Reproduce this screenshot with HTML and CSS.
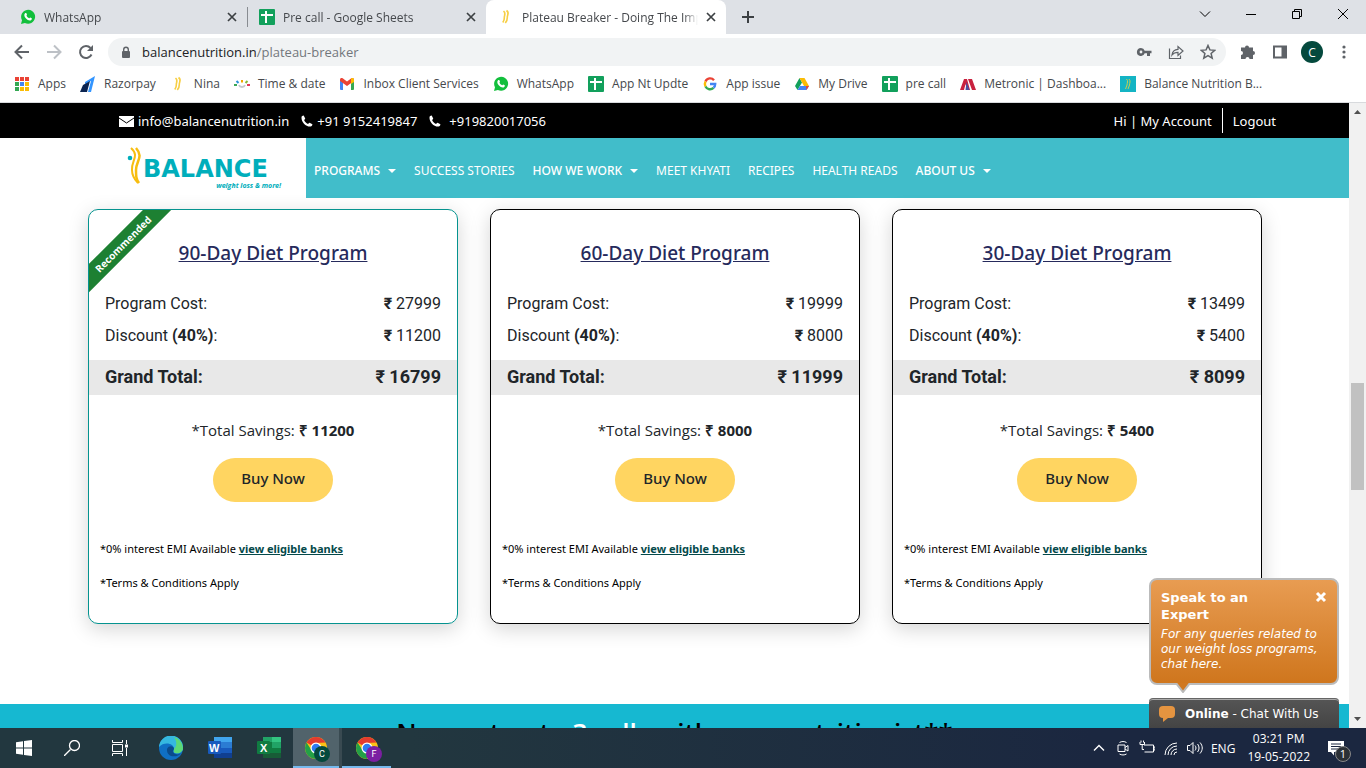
FILE: index.html
```html
<!DOCTYPE html>
<html lang="en">
<head>
  <meta charset="UTF-8" />
  <meta name="viewport" content="width=device-width, initial-scale=1.0"/>
  <title>Plateau Breaker</title>
  <link rel="stylesheet" href="styles.css">
</head>
<body>

  <!-- shared icons -->
  <svg class="sprite" aria-hidden="true">
    <symbol id="i-whatsapp" viewBox="0 0 16 16">
      <path d="M1 15l1-3.800A7 7 0 1 1 4.900 14z" fill="#12bf3c"/>
      <path d="M5 4.300c.5-.6 1.200-.5 1.400 0l.6 1.400c0 .5-.7.8-.6 1.100.6 1.200 1.500 2 2.700 2.500.4 0 .7-.9 1.100-.8l1.500.8c.4.4 0 1.500-.7 1.900-1.500.8-3.700-.3-5-1.700C4.500 8.100 3.600 5.900 5 4.300z" fill="#fff"/>
    </symbol>
    <symbol id="i-sheet" viewBox="0 0 16 16">
      <rect width="16" height="16" rx="1" fill="#12a05c"/>
      <path d="M2 5h12v2H8v7H6V7H2zM6 2h2v3H6z" fill="#fff"/>
    </symbol>
    <symbol id="i-wave" viewBox="0 0 16 16">
      <path d="M5.500 2c3 2.500.5 4.500.8 7 .1 2-.5 3-1.500 4.500M8.500 1.500c3.500 2.500.5 4.500.8 7 .1 2-.8 4-2 5.500" fill="none" stroke="#f7cf45" stroke-width="1.600"/>
    </symbol>
    <symbol id="i-close" viewBox="0 0 10 10">
      <path d="M1 1l8 8M9 1L1 9" stroke="#3c4043" stroke-width="1.700"/>
    </symbol>
    <symbol id="i-phone" viewBox="0 0 12 12">
      <path d="M.5 2.200C.6 1.300 1.700.5 2.700.6l1.500 2.800c.1.700-1.100 1.100-1.100 1.600.6 1.800 2 3.200 3.900 3.900.5 0 1-1.200 1.600-1.100l2.800 1.500c.1 1.100-.8 2.200-1.800 2.300C5 12 .2 7 .5 2.200z" fill="#fff"/>
    </symbol>
    <symbol id="i-chrome" viewBox="0 0 24 24">
      <circle cx="12" cy="12" r="11" fill="#fbc116"/>
      <path d="M12 12L2.500 6.500A11 11 0 0 1 21.500 6.500L12 7z" fill="#e33b2e"/>
      <path d="M12 23A11 11 0 0 1 2.500 6.500l5.200 8 6 2z" fill="#23a047"/>
      <circle cx="12" cy="12" r="5.500" fill="#fff"/>
      <circle cx="12" cy="12" r="4.300" fill="#2e7cf0"/>
    </symbol>
  </svg>

  <header class="tabs">
    <div class="tab">
      <svg class="icon"><use href="#i-whatsapp"/></svg>
      <span class="tab-title">WhatsApp</span>
      <button class="tab-close" aria-label="Close tab"><svg><use href="#i-close"/></svg></button>
    </div>
    <div class="tab divided">
      <svg class="icon"><use href="#i-sheet"/></svg>
      <span class="tab-title">Pre call - Google Sheets</span>
      <button class="tab-close" aria-label="Close tab"><svg><use href="#i-close"/></svg></button>
    </div>
    <div class="tab active">
      <svg class="icon"><use href="#i-wave"/></svg>
      <span class="tab-title">Plateau Breaker - Doing The Impossible</span>
      <button class="tab-close" aria-label="Close tab"><svg><use href="#i-close"/></svg></button>
    </div>
    <button class="new-tab" aria-label="New tab">
      <svg viewBox="0 0 12 12"><path d="M6 0v12M0 6h12" stroke="#3c4043" stroke-width="2"/></svg>
    </button>
    <div class="window-buttons">
      <button aria-label="Search tabs"><svg viewBox="0 0 12 12"><path d="M1 3.500l5 5 5-5"/></svg></button>
      <button aria-label="Minimize"><svg viewBox="0 0 12 12"><path d="M1 6.500h10"/></svg></button>
      <button aria-label="Restore"><svg viewBox="0 0 12 12"><path d="M1.500 3.500h7v7h-7zM3.500 3.500v-2h7v7h-2"/></svg></button>
      <button aria-label="Close"><svg viewBox="0 0 12 12"><path d="M1 1l10 10M11 1L1 11"/></svg></button>
    </div>
  </header>

  <div class="toolbar">
    <button aria-label="Back"><svg viewBox="0 0 16 16"><path d="M15 8H2M8 1.500L1.500 8 8 14.500" fill="none" stroke="#5f6368" stroke-width="2"/></svg></button>
    <button aria-label="Forward"><svg viewBox="0 0 16 16"><path d="M1 8h13M8 1.500L14.500 8 8 14.500" fill="none" stroke="#bdc1c6" stroke-width="2"/></svg></button>
    <button aria-label="Reload"><svg viewBox="0 0 16 16"><path d="M13.500 10.500A6 6 0 1 1 12.500 4" fill="none" stroke="#5f6368" stroke-width="2"/><path d="M15 1v6H9z" fill="#5f6368"/></svg></button>
    <div class="omnibox">
      <svg class="lock" viewBox="0 0 10 13"><rect x="1" y="5" width="8" height="7" rx="1" fill="#5f6368"/><path d="M2.700 5V3.500a2.300 2.300 0 0 1 4.600 0V5" fill="none" stroke="#5f6368" stroke-width="1.400"/></svg>
      <a class="url" href="#">balancenutrition.in<span>/plateau-breaker</span></a>
      <button aria-label="Passwords"><svg viewBox="0 0 16 16"><path d="M5 4a4 4 0 1 0 3.700 5.300H11V12h3V9.300h1.500V6.700H8.700A4 4 0 0 0 5 4zm0 2.600a1.400 1.400 0 1 1 0 2.800 1.400 1.400 0 0 1 0-2.800z" fill="#5f6368" fill-rule="evenodd"/></svg></button>
      <button aria-label="Share"><svg viewBox="0 0 16 16"><path d="M1.500 4.500v10h11v-3M4 11c.5-4 3-5.500 6-5.600V2.500l5 4.500-5 4.500V8.300C7.500 8.300 5.500 9 4 11z" fill="none" stroke="#5f6368" stroke-width="1.200"/></svg></button>
      <button aria-label="Bookmark"><svg viewBox="0 0 16 16"><path d="M8 1.500l1.900 4.400 4.800.4-3.600 3.200 1.100 4.700L8 11.700l-4.200 2.500 1.100-4.700L1.300 6.300l4.800-.4z" fill="none" stroke="#5f6368" stroke-width="1.500"/></svg></button>
    </div>
    <button aria-label="Extensions"><svg viewBox="0 0 16 16"><path d="M5 3.500a2 2 0 0 1 4 0h4v3.500a2 2 0 0 1 0 4v4H9.500a2 2 0 0 0-4 0H1v-4a2 2 0 0 0 0-4V3.500z" fill="#5f6368"/></svg></button>
    <button aria-label="Side panel"><svg viewBox="0 0 16 16"><path d="M2 2.500h12v11H2z" fill="none" stroke="#5f6368" stroke-width="2"/><path d="M9.500 2h4v12h-4z" fill="#5f6368"/></svg></button>
    <button class="avatar">C</button>
    <button aria-label="Menu"><svg viewBox="0 0 16 16" fill="#5f6368"><circle cx="8" cy="3" r="1.600"/><circle cx="8" cy="8" r="1.600"/><circle cx="8" cy="13" r="1.600"/></svg></button>
  </div>

  <nav class="bookmarks">
    <a href="#"><svg class="icon" viewBox="0 0 16 16"><path d="M1 1h4v4H1z" fill="#ea4335"/><path d="M6 1h4v4H6z" fill="#ea4335"/><path d="M11 1h4v4h-4z" fill="#ea4335"/><path d="M1 6h4v4H1z" fill="#34a853"/><path d="M6 6h4v4H6z" fill="#4285f4"/><path d="M11 6h4v4h-4z" fill="#fbbc04"/><path d="M1 11h4v4H1z" fill="#34a853"/><path d="M6 11h4v4H6z" fill="#fbbc04"/><path d="M11 11h4v4h-4z" fill="#fbbc04"/><path d="M5 0h1v16H5zM10 0h1v16h-1zM0 5h16v1H0zM0 10h16v1H0z" fill="#fff"/></svg>Apps</a>
    <a href="#"><svg class="icon" viewBox="0 0 16 16"><path d="M5 6l10-6-4 16H8l3-11-6 3z" fill="#3395ff"/><path d="M3 9l7-4-3 11H0z" fill="#0b2450"/></svg>Razorpay</a>
    <a href="#"><svg class="icon"><use href="#i-wave"/></svg>Nina</a>
    <a href="#"><svg class="icon" viewBox="0 0 16 16" fill="none" stroke-width="2"><path d="M0 9h3" stroke="#3aa757"/><path d="M2.500 5l2 2" stroke="#2a90d9"/><path d="M8 4v2.500" stroke="#f2a900"/><path d="M13.500 5l-2 2" stroke="#86b93c"/><path d="M13 9h3" stroke="#e0395a"/><path d="M5 9c1 2.500 5 2.500 6 0" stroke="#c5c8cc"/></svg>Time &amp; date</a>
    <a href="#"><svg class="icon" viewBox="0 0 16 16"><path d="M1 4h3v10H2a1 1 0 0 1-1-1z" fill="#4285f4"/><path d="M12 4h3v9a1 1 0 0 1-1 1h-2z" fill="#34a853"/><path d="M1 4c0-2 1.500-2.500 3-1.500l4 3 4-3C13.500 1.500 15 2 15 4v1l-7 5-7-5z" fill="#ea4335"/><path d="M12 2.500C13.500 1.500 15 2 15 4v2l-3 2z" fill="#fbbc04"/></svg>Inbox Client Services</a>
    <a href="#"><svg class="icon"><use href="#i-whatsapp"/></svg>WhatsApp</a>
    <a href="#"><svg class="icon"><use href="#i-sheet"/></svg>App Nt Updte</a>
    <a href="#"><svg class="icon" viewBox="0 0 16 16" fill="none" stroke-width="2.400"><path d="M12 4.200A5 5 0 0 0 3.500 5.500" stroke="#ea4335"/><path d="M3.500 5.500a5.200 5.200 0 0 0 0 5" stroke="#fbbc04"/><path d="M3.500 10.500a5 5 0 0 0 8 1.300" stroke="#34a853"/><path d="M8 8h5.200c0 1.800-.6 3-1.700 3.800" stroke="#4285f4"/></svg>App issue</a>
    <a href="#"><svg class="icon" viewBox="0 0 16 16"><path d="M5.500 2L8 6.500 3.500 14 1 10z" fill="#12a05c"/><path d="M5.500 2h5l4.500 8h-5z" fill="#fbbc04"/><path d="M6 10h9l-2.500 4h-9z" fill="#4285f4"/><path d="M12 10h3l-2.500 4z" fill="#ea4335"/></svg>My Drive</a>
    <a href="#"><svg class="icon"><use href="#i-sheet"/></svg>pre call</a>
    <a href="#"><svg class="icon" viewBox="0 0 16 16"><path d="M0 14L4 3h3l3 11H7L5.500 8 4 14zM8 3h4l4 11h-4z" fill="#c9223f"/><path d="M6.500 6l3 8h-4z" fill="#4b4fa0"/></svg>Metronic | Dashboa...</a>
    <a href="#"><svg class="icon" viewBox="0 0 16 16"><path d="M0 0h16v16H0z" fill="#14b4c4"/><path d="M6.500 3c2 2 .5 4 .5 6l-1.500 4M9 3c2 2 .5 4 .5 6L8 13" fill="none" stroke="#c9cf50"/></svg>Balance Nutrition B...</a>
  </nav>

  <main class="viewport">
    <div class="page">
      <div class="topbar">
        <a href="#"><svg class="mail" viewBox="0 0 15 12"><path d="M0 1h15v11H0z" fill="#fff"/><path d="M0 3l7.500 5L15 3" fill="none" stroke="#000"/></svg>info@balancenutrition.in</a>
        <a href="#"><svg class="phone"><use href="#i-phone"/></svg>+91 9152419847</a>
        <a class="spaced" href="#"><svg class="phone"><use href="#i-phone"/></svg>+919820017056</a>
        <a class="account" href="#">Hi | My Account</a>
        <a class="logout" href="#">Logout</a>
      </div>

      <div class="site-nav">
        <a class="logo" href="#">
          <svg viewBox="0 0 16 40"><path d="M4 1c9 8 0 13 1 22 0 6 2 9 6 13" fill="none" stroke="#f7bd10" stroke-width="2"/><path d="M9 1c8 9 0 13 0 22 0 6 0 9 3 13" fill="none" stroke="#f7bd10" stroke-width="2.500"/><circle cx="3" cy="11" r="2.300" fill="#00aebb"/></svg>
          <span class="logo-text">
            <span class="brand">BALANCE</span>
            <span class="tagline">weight loss &amp; more!</span>
          </span>
        </a>
        <nav class="menu">
          <a class="drop" href="#">PROGRAMS</a>
          <a href="#">SUCCESS STORIES</a>
          <a class="drop" href="#">HOW WE WORK</a>
          <a href="#">MEET KHYATI</a>
          <a href="#">RECIPES</a>
          <a href="#">HEALTH READS</a>
          <a class="drop" href="#">ABOUT US</a>
        </nav>
      </div>

      <section class="plans">
        <article class="plan recommended">
          <div class="ribbon">Recommended</div>
          <h3>90-Day Diet Program</h3>
          <table>
            <tr><th>Program Cost:</th><td><b>₹</b> 27999</td></tr>
            <tr class="discount"><th>Discount <b>(40%)</b>:</th><td><b>₹</b> 11200</td></tr>
            <tr class="total"><th>Grand Total:</th><td>₹ 16799</td></tr>
          </table>
          <p class="savings">*Total Savings: <b>₹ 11200</b></p>
          <button class="buy">Buy Now</button>
          <p class="note">*0% interest EMI Available <a href="#">view eligible banks</a></p>
          <p class="note">*Terms &amp; Conditions Apply</p>
        </article>

        <article class="plan">
          <h3>60-Day Diet Program</h3>
          <table>
            <tr><th>Program Cost:</th><td><b>₹</b> 19999</td></tr>
            <tr class="discount"><th>Discount <b>(40%)</b>:</th><td><b>₹</b> 8000</td></tr>
            <tr class="total"><th>Grand Total:</th><td>₹ 11999</td></tr>
          </table>
          <p class="savings">*Total Savings: <b>₹ 8000</b></p>
          <button class="buy">Buy Now</button>
          <p class="note">*0% interest EMI Available <a href="#">view eligible banks</a></p>
          <p class="note">*Terms &amp; Conditions Apply</p>
        </article>

        <article class="plan">
          <h3>30-Day Diet Program</h3>
          <table>
            <tr><th>Program Cost:</th><td><b>₹</b> 13499</td></tr>
            <tr class="discount"><th>Discount <b>(40%)</b>:</th><td><b>₹</b> 5400</td></tr>
            <tr class="total"><th>Grand Total:</th><td>₹ 8099</td></tr>
          </table>
          <p class="savings">*Total Savings: <b>₹ 5400</b></p>
          <button class="buy">Buy Now</button>
          <p class="note">*0% interest EMI Available <a href="#">view eligible banks</a></p>
          <p class="note">*Terms &amp; Conditions Apply</p>
        </article>
      </section>

      <section class="calls">
        <h2>Now get upto <span>3 calls</span> with your nutritionist**</h2>
      </section>

      <aside class="chat">
        <div class="bubble">
          <div class="bubble-head">
            <h4>Speak to an Expert</h4>
            <button aria-label="Close"><svg viewBox="0 0 12 12"><path d="M2 2l8 8M10 2l-8 8" stroke="#fff" stroke-width="3"/></svg></button>
          </div>
          <p>For any queries related to our weight loss programs, chat here.</p>
          <svg class="tail" viewBox="0 0 14 10"><path d="M0 0l7 9 7-9" fill="#d07820" stroke="#bbb" stroke-width="2"/></svg>
        </div>
        <button class="chat-bar">
          <svg viewBox="0 0 18 18"><rect x="1" y="1" width="16" height="12" rx="4" fill="#e59440"/><path d="M5 12v5l5-4z" fill="#e59440"/></svg>
          <span><b>Online</b> - Chat With Us</span>
        </button>
      </aside>
    </div>

    <div class="scrollbar">
      <svg viewBox="0 0 17 17"><path d="M5 11l3.500-4 3.500 4z" fill="#505050"/></svg>
      <div class="thumb"></div>
      <svg viewBox="0 0 17 17"><path d="M5 6l3.500 4L12 6z" fill="#505050"/></svg>
    </div>
  </main>

  <footer class="taskbar">
    <div class="system">
      <button aria-label="Start"><svg viewBox="0 0 16 16"><path d="M0 2.300L7 1.300V7.500H0zM8 1.100L16 0v7.500H8zM0 8.500h7v6.200l-7-1zM8 8.500h8V16l-8-1.100z" fill="#fff"/></svg></button>
      <button aria-label="Search"><svg viewBox="0 0 16 16"><path d="M0 16l6.500-6.500" stroke="#fff" stroke-width="1.300"/><circle cx="10.500" cy="5.500" r="5" fill="none" stroke="#fff" stroke-width="1.300"/></svg></button>
      <button aria-label="Task view"><svg viewBox="0 0 16 16"><path d="M.5 0v2.500h10V0M.5 4.500h10v7H.5zM.5 16v-2.500h10V16M14.500 0v4M14.500 8v8" fill="none" stroke="#fff"/><path d="M13 4.500h3v3h-3z" fill="#fff"/></svg></button>
    </div>
    <div class="apps">
      <button aria-label="Edge">
        <svg viewBox="0 0 24 24"><circle cx="12" cy="12" r="12" fill="#0f6fc4"/><path d="M0 11A12 12 0 0 1 24 12c0 4-4 6-8 5-2-1-1-2-1-4 0-6-10-8-15-2z" fill="#35b8e0"/><path d="M15 1a12 12 0 0 1 9 11c0 4-4 6-8 5-2-1-1-2-1-4 3-3 3-8 0-12z" fill="#5cd976"/><path d="M8 13c2-4 7-3 7 0-2 2-1 4 1 5 3 1 5 0 6-1-3 5-15 5-14-4z" fill="#0a4b8c"/></svg>
      </button>
      <button aria-label="Word">
        <svg viewBox="0 0 24 24"><path d="M6 1h18v6H6z" fill="#41a5ee"/><path d="M6 6h18v6H6z" fill="#2b7cd3"/><path d="M6 12h18v5H6z" fill="#185abd"/><path d="M6 17h18v5H6z" fill="#103f91"/><rect y="5" width="13" height="13" rx="1" fill="#185abd"/><text x="1" y="16" class="app-letter">W</text></svg>
      </button>
      <button aria-label="Excel">
        <svg viewBox="0 0 24 24"><path d="M6 1h9v6H6z" fill="#21a366"/><path d="M15 1h9v6h-9z" fill="#33c481"/><path d="M6 6h9v6H6z" fill="#107c41"/><path d="M15 6h9v6h-9z" fill="#21a366"/><path d="M6 12h18v5H6z" fill="#107c41"/><path d="M6 17h18v5H6z" fill="#185c37"/><rect y="5" width="13" height="13" rx="1" fill="#107c41"/><text x="3" y="16" class="app-letter">X</text></svg>
      </button>
      <button class="current" aria-label="Chrome">
        <svg><use href="#i-chrome"/></svg><span class="badge">C</span>
      </button>
      <button class="running" aria-label="Chrome">
        <svg><use href="#i-chrome"/></svg><span class="badge purple">F</span>
      </button>
    </div>
    <div class="tray">
      <svg viewBox="0 0 16 16"><path d="M3 10.500l5-5 5 5" stroke-width="1.400"/></svg>
      <svg viewBox="0 0 16 16"><path d="M3 5h7v6.500H3zM10 7.500l3-2v5.500l-3-2M4.500 2.500c2-1.300 5-1.300 7 0M4.500 14c2 1.300 5 1.300 7 0"/></svg>
      <svg viewBox="0 0 16 16"><path d="M5 5h9.500v7H5.500M14.500 7H16v3h-1.500M1 2v2.500h4.500V2M2 .5v2M4.500.5v2M3.200 5v4.500H5"/></svg>
      <svg viewBox="0 0 16 16"><path d="M2 15A12 12 0 0 1 14 3M5 15a9 9 0 0 1 9-9M8 15a6 6 0 0 1 6-6M11 15a3 3 0 0 1 3-3"/></svg>
      <svg viewBox="0 0 16 16"><path d="M.5 5.500H3l3-3v11l-3-3H.500zM8 5.500c1.300 1.500 1.300 3.500 0 5M10.500 4c2 2.500 2 5.500 0 8M13 2.500c3 3.500 3 7.500 0 11"/></svg>
      <span>ENG</span>
      <div class="clock">03:21 PM<br>19-05-2022</div>
      <button class="alerts" aria-label="Notifications">
        <svg viewBox="0 0 16 16"><path d="M0 1h16v11H6v3.500L3 12H0z" fill="#fff" stroke="none"/><path d="M3 4h10M3 6.500h10M3 9h7" stroke="#1b2640"/></svg>
        <span class="count">1</span>
      </button>
    </div>
  </footer>

</body>
</html>
```
FILE: styles.css
```css
* {
  margin: 0;
  padding: 0;
  box-sizing: border-box;
}

body {
  height: 100vh;
  display: flex;
  flex-direction: column;
  overflow: hidden;
  background-color: white;
  color: black;
  font-family: "Segoe UI", "Open Sans", sans-serif;
  font-size: 12px;
}

button {
  border: none;
  background: none;
  font: inherit;
  color: inherit;
  cursor: pointer;
}

a {
  color: inherit;
  text-decoration: none;
}

svg {
  display: block;
  flex: none;
}

.sprite {
  position: absolute;
  width: 0;
  height: 0;
}

.icon {
  width: 16px;
  height: 16px;
}

/* browser tabs */
.tabs {
  display: flex;
  height: 34px;
  padding-left: 8px;
  background-color: #dee1e6;
  color: #45484c;
}

.tab {
  display: flex;
  align-items: center;
  gap: 8px;
  width: 239px;
  padding: 0 10px 0 12px;
}

.tab.divided {
  background: linear-gradient(#888c91, #888c91) left center / 1px 20px no-repeat;
}

.tab.active {
  width: 240px;
  background-color: white;
  border-radius: 8px 8px 0 0;
}

.tab-title {
  flex: 1;
  overflow: hidden;
  white-space: nowrap;
  mask-image: linear-gradient(to right, black 92%, transparent);
}

.tab-close svg {
  width: 10px;
  height: 10px;
}

.new-tab {
  padding: 0 16px;
}

.new-tab svg {
  width: 12px;
  height: 12px;
}

.window-buttons {
  display: flex;
  margin-left: auto;
  padding-bottom: 6px;
}

.window-buttons button {
  width: 46px;
  display: flex;
  align-items: center;
  justify-content: center;
}

.window-buttons svg {
  width: 12px;
  height: 12px;
  fill: none;
  stroke: black;
}

/* address bar */
.toolbar {
  display: flex;
  align-items: center;
  gap: 16px;
  height: 36px;
  padding: 0 14px;
}

.toolbar svg {
  width: 16px;
  height: 16px;
}

.omnibox {
  flex: 1;
  display: flex;
  align-items: center;
  gap: 16px;
  height: 28px;
  margin: 0 -2px;
  padding: 0 10px 0 13px;
  border-radius: 14px;
  background-color: #f1f3f4;
}

.toolbar .lock {
  width: 10px;
  height: 13px;
}

.url {
  flex: 1;
  margin-left: -5px;
  font-size: 13px;
  color: #202124;
}

.url span {
  color: #73777c;
}

.toolbar .avatar {
  width: 22px;
  height: 22px;
  margin: 0 -3px;
  border-radius: 50%;
  background-color: #04493d;
  color: white;
}

.bookmarks {
  display: flex;
  gap: 14px;
  height: 33px;
  padding: 0 14px 5px;
  border-bottom: 1px solid #d8dadd;
  color: #45484c;
  white-space: nowrap;
}

.bookmarks a {
  display: flex;
  align-items: center;
  gap: 8px;
}

/* web page */
.viewport {
  flex: 1;
  display: flex;
  min-height: 0;
}

.page {
  position: relative;
  flex: 1;
  overflow: hidden;
}

.topbar {
  position: relative;
  display: flex;
  align-items: center;
  gap: 12px;
  height: 35px;
  padding: 0 73px 0 119px;
  background-color: black;
  color: white;
  font-family: "Segoe UI", "Noto Sans", sans-serif;
  font-size: 13px;
}

.topbar a {
  display: flex;
  align-items: center;
  gap: 4px;
}

.topbar .spaced {
  gap: 8px;
}

.topbar .mail {
  width: 15px;
  height: 12px;
}

.topbar .phone {
  width: 12px;
  height: 12px;
}

.topbar .account {
  margin-left: auto;
}

.topbar .logout {
  height: 25px;
  padding-left: 10px;
  margin-left: -2px;
  border-left: 1px solid white;
}

.site-nav {
  position: relative;
  display: flex;
  height: 60px;
  background-color: #41bdca;
}

.logo {
  display: flex;
  width: 306px;
  padding: 9px 24px 0 127px;
  background-color: white;
}

.logo svg {
  width: 16px;
  height: 40px;
}

.logo-text {
  display: flex;
  flex-direction: column;
  width: 138px;
  padding-top: 10px;
  color: #00aebb;
}

.brand {
  font: bold 24px/24px "DejaVu Sans", sans-serif;
}

.tagline {
  align-self: flex-end;
  font-size: 7px;
  line-height: 10px;
  font-style: italic;
  font-weight: bold;
}

.menu {
  display: flex;
  align-items: center;
  gap: 18px;
  padding: 5px 0 0 8px;
  color: white;
  font-family: "Segoe UI", "Noto Sans", sans-serif;
  white-space: nowrap;
}

.menu .drop {
  font-weight: 500;
}

.drop::after {
  content: "";
  display: inline-block;
  margin-left: 8px;
  vertical-align: 2px;
  border: 4px solid transparent;
  border-top-color: white;
  border-bottom: none;
}

.plans {
  display: grid;
  grid-template-columns: repeat(3, 1fr);
  gap: 32px;
  padding: 11px 87px 80px 88px;
}

.plan {
  position: relative;
  height: 415px;
  overflow: hidden;
  border: 1px solid black;
  border-radius: 10px;
  box-shadow: 0 5px 20px rgba(0, 0, 0, 0.17);
  color: #212529;
  text-align: center;
}

.plan.recommended {
  border-color: #05938f;
}

.ribbon {
  position: absolute;
  top: 24px;
  left: -26px;
  width: 120px;
  transform: rotate(-45deg);
  background-color: #1d8032;
  color: white;
  font-size: 10px;
  line-height: 20px;
  font-weight: bold;
}

.plan h3 {
  margin: 29px 0 20px;
  font-family: "Segoe UI", "Noto Sans", sans-serif;
  font-size: 19px;
  line-height: 29px;
  font-weight: 500;
  color: #262a5c;
  text-decoration: underline;
}

.plan table {
  width: 100%;
  border-collapse: collapse;
  font: 16px/32px Roboto, sans-serif;
}

.plan th {
  padding-left: 16px;
  font-weight: normal;
  text-align: left;
}

.plan td {
  padding-right: 16px;
  text-align: right;
}

.discount th,
.discount td {
  padding-bottom: 8px;
}

.plan .total {
  background-color: #e8e8e8;
}

.plan .total th,
.plan .total td {
  font-size: 18px;
  line-height: 33px;
  padding-bottom: 2px;
  font-weight: bold;
}

.savings {
  margin-top: 23px;
  font-size: 15px;
  line-height: 24px;
}

.buy {
  width: 120px;
  height: 44px;
  margin: 16px 0 37px;
  padding-bottom: 4px;
  border-radius: 22px;
  background-color: #ffd561;
  font-family: "Segoe UI", "Noto Sans", sans-serif;
  font-size: 15px;
  font-weight: 500;
}

.note {
  padding-left: 11px;
  margin-bottom: 14px;
  font-family: "Segoe UI", "Noto Sans", sans-serif;
  font-size: 11px;
  line-height: 20px;
  text-align: left;
  color: black;
}

.note a {
  font-weight: bold;
  color: #04494a;
  text-decoration: underline;
}

.calls {
  height: 200px;
  padding-top: 11px;
  background-color: #16b8d1;
  text-align: center;
}

.calls h2 {
  font-size: 26px;
  line-height: 34px;
  font-weight: 600;
}

.calls span {
  color: white;
}

/* chat widget, over the page */
.chat {
  position: absolute;
  right: 10px;
  bottom: 0;
  width: 190px;
  color: white;
  font-family: Verdana, "DejaVu Sans", sans-serif;
}

.bubble {
  position: relative;
  margin-bottom: 13px;
  padding: 9px 10px 11px;
  border: 2px solid #bbb;
  border-radius: 8px;
  background: linear-gradient(#e89c52, #cf761d);
}

.bubble-head {
  display: flex;
  justify-content: space-between;
  align-items: flex-start;
}

.bubble h4 {
  width: 110px;
  font-size: 13px;
  line-height: 17px;
}

.bubble-head svg {
  width: 12px;
  height: 12px;
  margin-top: 2px;
}

.bubble p {
  margin: 4px -4px 0 0;
  line-height: 15px;
  font-style: italic;
}

.tail {
  position: absolute;
  top: 100%;
  left: 25px;
  width: 14px;
  height: 10px;
}

.chat-bar {
  display: flex;
  align-items: center;
  gap: 9px;
  width: 100%;
  height: 30px;
  padding-left: 9px;
  border-top: 1px solid #666;
  border-radius: 4px 4px 0 0;
  background: linear-gradient(#555, #444);
  box-shadow: inset 0 1px #aaa;
}

.chat-bar svg {
  width: 18px;
  height: 18px;
}

.scrollbar {
  display: flex;
  flex-direction: column;
  width: 17px;
  background-color: #f1f1f1;
}

.scrollbar svg {
  width: 17px;
  height: 17px;
}

.thumb {
  height: 107px;
  margin: 263px 2px auto;
  background-color: #c1c1c1;
}

/* taskbar */
.taskbar {
  display: flex;
  height: 40px;
  background: linear-gradient(to right, #22373f 30%, #1b2740 80%);
  color: white;
}

.system,
.apps {
  display: flex;
}

.apps {
  margin-left: 2px;
}

.system button,
.apps button {
  position: relative;
  width: 48px;
  display: flex;
  align-items: center;
  justify-content: center;
}

.apps button {
  width: 49px;
}

.system svg {
  width: 16px;
  height: 16px;
}

.apps svg {
  width: 24px;
  height: 24px;
}

.app-letter {
  fill: white;
  font: bold 11px "Liberation Sans", sans-serif;
}

.apps .current {
  background-color: #51636b;
  border-right: 3px solid #394a51;
}

.apps .current,
.apps .running {
  box-shadow: inset 0 -2px #76b9ed;
}

.badge {
  position: absolute;
  right: 9px;
  bottom: 6px;
  width: 16px;
  border-radius: 50%;
  background-color: #04493d;
  font: 9px/16px Roboto, sans-serif;
}

.badge.purple {
  background-color: #7b1fa2;
}

.tray {
  display: flex;
  align-items: center;
  gap: 8px;
  margin-left: auto;
  padding-right: 22px;
}

.tray svg {
  width: 16px;
  height: 16px;
  fill: none;
  stroke: white;
}

.clock {
  margin: 0 10px 0 4px;
  line-height: 18px;
  text-align: center;
}

.alerts {
  position: relative;
}

.count {
  position: absolute;
  left: 7px;
  top: 6px;
  width: 16px;
  border: 1px solid #888;
  border-radius: 50%;
  background-color: #2b3036;
  font-size: 11px;
  line-height: 14px;
}
```
